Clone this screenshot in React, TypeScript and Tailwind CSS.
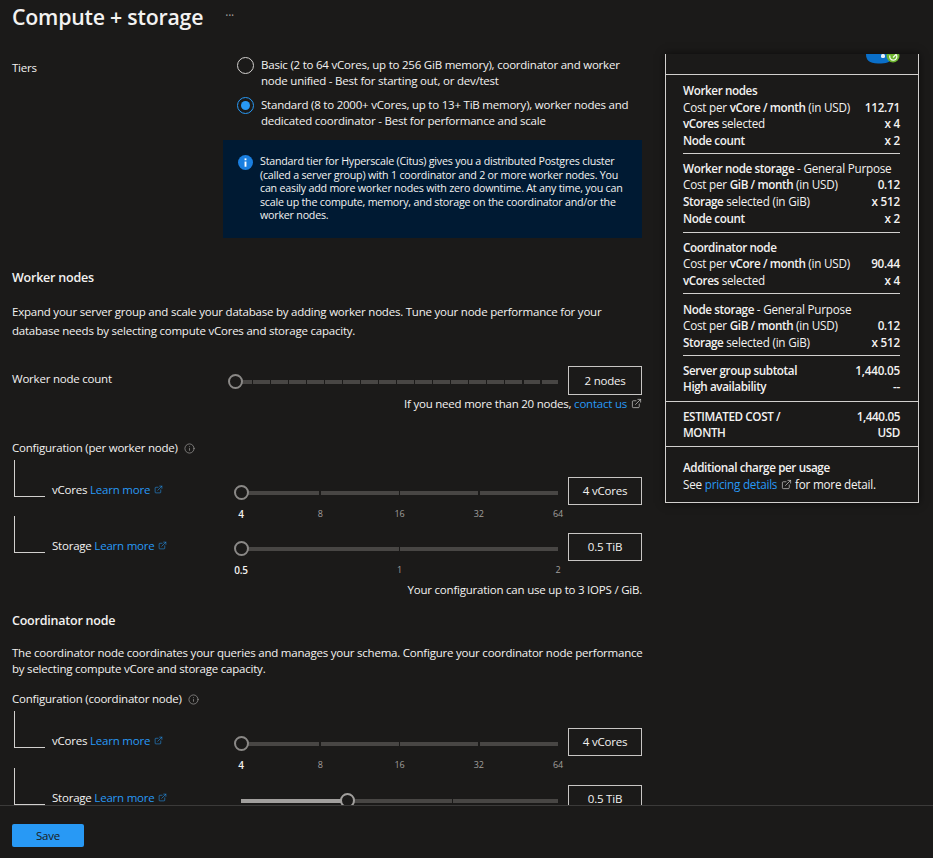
import { ExternalLink, Info } from "lucide-react";

const TEXT_FONT = "font-['Open_Sans','Liberation_Sans',sans-serif]";

function OutLink({ children, small }: { children: string; small?: boolean }) {
  return (
    <span className="text-[#2899f5]">
      {children}
      <ExternalLink
        className={small ? "inline ml-[4px] mb-[2px] w-[9px] h-[9px]" : "inline ml-[4px] mb-[3px] w-[11px] h-[11px] text-[#d2d0ce]"}
        strokeWidth={1.5}
      />
    </span>
  );
}

function Slider({ segments, fill = 0 }: { segments: number; fill?: number }) {
  return (
    <div className="relative h-[15px] flex items-center">
      <div className="flex-1 flex gap-[1.5px] ml-[7px]">
        {Array.from({ length: segments }).map((_, i) => (
          <div key={i} className={i < fill ? "h-[4px] flex-1 bg-[#a19f9d]" : "h-[4px] flex-1 bg-[#484644]"} />
        ))}
      </div>
      <div
        className={
          fill
            ? "absolute left-[106px] top-0 w-[15px] h-[15px] rounded-full border-2 border-[#a19f9d] bg-[#1b1a19]"
            : "absolute left-0 top-0 w-[15px] h-[15px] rounded-full border-2 border-[#8a8886] bg-[#1b1a19]"
        }
      />
    </div>
  );
}

function Ticks({ labels }: { labels: string[] }) {
  return (
    <div className="flex justify-between ml-[7px] mt-[7px] h-[14px]">
      {labels.map((l, i) => (
        <div key={l} className="w-0 flex justify-center">
          <span className={i === 0 ? "text-[10px] leading-[14px] font-semibold text-[#f3f2f1]" : "text-[9px] leading-[14px] text-[#a19f9d]"}>{l}</span>
        </div>
      ))}
    </div>
  );
}

function ValueBox({ value, height = "h-[28px]" }: { value: string; height?: string }) {
  return (
    <div className={`w-[74px] ${height} shrink-0 border border-[#c8c6c4] flex items-center justify-center text-[11.5px]`}>
      {value}
    </div>
  );
}

function TreeRow({
  name,
  value,
  segments,
  labels,
  fill,
  height,
}: {
  name: string;
  value: string;
  segments: number;
  labels?: string[];
  fill?: number;
  height: string;
}) {
  return (
    <div className={`flex ${height}`}>
      <div className="w-[31px] h-[37px] ml-[2px] shrink-0 border-l border-b border-[#d2d0ce]" />
      <div className="w-[182px] ml-[7px] shrink-0 mt-[21px] h-[18px] leading-[18px] whitespace-nowrap">
        {name} <OutLink small>Learn more</OutLink>
      </div>
      <div className="w-[324px] shrink-0 mt-[25px]">
        <Slider segments={segments} fill={fill} />
        {labels && <Ticks labels={labels} />}
      </div>
      <div className="ml-[10px] mt-[17px]">
        <ValueBox value={value} />
      </div>
    </div>
  );
}

function CostRow({ label, value }: { label: React.ReactNode; value?: string }) {
  return (
    <div className="flex justify-between leading-[16.7px] h-[16.7px] whitespace-nowrap">
      <div>{label}</div>
      {value && <div className="font-semibold">{value}</div>}
    </div>
  );
}

const B = ({ children }: { children: string }) => <span className="font-semibold tracking-[-0.4px]">{children}</span>;
const Rule = () => <div className="h-px bg-[#d2d0ce]" />;

export default function App() {
  return (
    <div className={`${TEXT_FONT} tracking-[-0.22px] w-[933px] h-[858px] flex flex-col bg-[#1b1a19] text-[#f3f2f1] overflow-hidden`}>
      <div className="h-[36px] shrink-0 pl-3 pb-[2px] flex items-center">
        <h1 className="text-[21.3px] leading-[28px] font-semibold">Compute + storage</h1>
        <span className="ml-[22px] mb-[2px] text-[12px] text-[#a19f9d]">···</span>
      </div>

      <div className="flex-1 flex overflow-hidden">
        <div className="w-[642px] shrink-0 pl-3 text-[11.5px]">
          <div className="flex">
            <div className="w-[211px] shrink-0 mt-[23px] leading-[18px]">Tiers</div>
            <div className="w-[419px] shrink-0">
              <div className="pl-[14px] mt-[21px] flex gap-[7px] leading-[16px]">
                <div className="w-[17px] h-[17px] shrink-0 rounded-full border border-[#d2d0ce]" />
                <div>
                  Basic (2 to 64 vCores, up to 256 GiB memory), coordinator and worker
                  <br />
                  node unified - Best for starting out, or dev/test
                </div>
              </div>
              <div className="pl-[14px] mt-[8px] flex gap-[7px] leading-[16px]">
                <div className="w-[17px] h-[17px] shrink-0 rounded-full border border-[#2899f5] flex items-center justify-center">
                  <div className="w-[9px] h-[9px] rounded-full bg-[#2899f5]" />
                </div>
                <div>
                  Standard (8 to 2000+ vCores, up to 13+ TiB memory), worker nodes and
                  <br />
                  dedicated coordinator - Best for performance and scale
                </div>
              </div>
              <div className="mt-[11px] h-[98px] bg-[#001a33] pl-[15px] pt-[15px] flex gap-[7px]">
                <svg width="15" height="15" viewBox="0 0 16 16" className="shrink-0">
                  <circle cx="8" cy="8" r="8" fill="#1a7fe0" />
                  <rect x="7" y="7" width="2" height="5.5" fill="#fff" />
                  <rect x="7" y="3.6" width="2" height="2" fill="#fff" />
                </svg>
                <div className="text-[10.7px] leading-[13.5px]">
                  Standard tier for Hyperscale (Citus) gives you a distributed Postgres cluster
                  <br />
                  (called a server group) with 1 coordinator and 2 or more worker nodes. You
                  <br />
                  can easily add more worker nodes with zero downtime. At any time, you can
                  <br />
                  scale up the compute, memory, and storage on the coordinator and/or the
                  <br />
                  worker nodes.
                </div>
              </div>
            </div>
          </div>

          <h2 className="mt-[31px] text-[12.5px] leading-[18px] font-semibold">Worker nodes</h2>
          <p className="mt-[15px] leading-[19px]">
            Expand your server group and scale your database by adding worker nodes. Tune your node performance for your
            <br />
            database needs by selecting compute vCores and storage capacity.
          </p>

          <div className="mt-[26px] flex items-center h-[29px]">
            <div className="w-[216px] shrink-0 mb-[3px]">Worker node count</div>
            <div className="w-[330px] shrink-0 mt-[2px]">
              <Slider segments={18} />
            </div>
            <div className="ml-[10px]">
              <ValueBox value="2 nodes" height="h-[29px]" />
            </div>
          </div>
          <div className="mt-[1px] leading-[16px] text-right">
            If you need more than 20 nodes, <OutLink>contact us</OutLink>
          </div>

          <div className="mt-[27px] leading-[18px] flex items-center gap-[6px]">
            Configuration (per worker node) <Info className="w-[11px] h-[11px] text-[#a19f9d]" strokeWidth={1.5} />
          </div>
          <div className="mt-[3px]">
            <TreeRow name="vCores" value="4 vCores" segments={4} labels={["4", "8", "16", "32", "64"]} height="h-[56px]" />
            <TreeRow name="Storage" value="0.5 TiB" segments={2} labels={["0.5", "1", "2"]} height="h-[56px]" />
          </div>
          <div className="mt-[9px] leading-[18px] text-right">Your configuration can use up to 3 IOPS / GiB.</div>

          <h2 className="mt-[13px] text-[12.5px] leading-[18px] font-semibold">Coordinator node</h2>
          <p className="mt-[15px] leading-[16px] whitespace-nowrap">
            The coordinator node coordinates your queries and manages your schema. Configure your coordinator node performance
            <br />
            by selecting compute vCore and storage capacity.
          </p>
          <div className="mt-[13px] leading-[18px] flex items-center gap-[6px]">
            Configuration (coordinator node) <Info className="w-[11px] h-[11px] text-[#a19f9d]" strokeWidth={1.5} />
          </div>
          <div className="mt-[3px]">
            <TreeRow name="vCores" value="4 vCores" segments={4} labels={["4", "8", "16", "32", "64"]} height="h-[57px]" />
            <TreeRow name="Storage" value="0.5 TiB" segments={3} fill={1} height="h-[37px]" />
          </div>
        </div>

        <div className="pt-[18px] pl-[23px]">
          <div className="w-[254px] border-x border-b border-[#d2d0ce] text-[11.7px] shadow-[0_0_8px_rgba(0,0,0,0.6)]">
            <div className="h-[21px] border-b border-[#d2d0ce] flex justify-end items-start pr-[16px]">
              <svg width="36" height="10" viewBox="0 0 36 10" className="overflow-hidden">
                <path d="M0 0H24V6C24 8 21 9.500 12 9.500C3 9.500 0 6 0 0Z" fill="#0a6fc9" />
                <rect x="15" y="0" width="4" height="4" rx="1.500" fill="#e8f1fa" />
                <circle cx="27" cy="2" r="6.500" fill="#6cb52d" />
                <path d="M24 1.500A3.500 3.500 0 1 0 30 0.500L27 3.500" fill="none" stroke="#f3f9ec" strokeWidth="1.300" />
              </svg>
            </div>
            <div className="pl-[17px] pr-[18px]">
              <div className="pt-[7px] pb-[4px]">
                <CostRow label={<B>Worker nodes</B>} />
                <CostRow label={<>Cost per <B>vCore / month</B> (in USD)</>} value="112.71" />
                <CostRow label={<><B>vCores</B> selected</>} value="x 4" />
                <CostRow label={<B>Node count</B>} value="x 2" />
              </div>
              <Rule />
              <div className="pt-[6px] pb-[5px]">
                <CostRow label={<><B>Worker node storage</B> - General Purpose</>} />
                <CostRow label={<>Cost per <B>GiB / month</B> (in USD)</>} value="0.12" />
                <CostRow label={<><B>Storage</B> selected (in GiB)</>} value="x 512" />
                <CostRow label={<B>Node count</B>} value="x 2" />
              </div>
              <Rule />
              <div className="pt-[6px] pb-[4px]">
                <CostRow label={<B>Coordinator node</B>} />
                <CostRow label={<>Cost per <B>vCore / month</B> (in USD)</>} value="90.44" />
                <CostRow label={<><B>vCores</B> selected</>} value="x 4" />
              </div>
              <Rule />
              <div className="pt-[7px] pb-[4px]">
                <CostRow label={<><B>Node storage</B> - General Purpose</>} />
                <CostRow label={<>Cost per <B>GiB / month</B> (in USD)</>} value="0.12" />
                <CostRow label={<><B>Storage</B> selected (in GiB)</>} value="x 512" />
              </div>
              <Rule />
              <div className="pt-[6px] pb-[6px]">
                <CostRow label={<B>Server group subtotal</B>} value="1,440.05" />
                <CostRow label={<B>High availability</B>} value="--" />
              </div>
            </div>
            <Rule />
            <div className="pl-[17px] pr-[18px] pt-[6px] pb-[6px] flex justify-between font-semibold tracking-[-0.4px] leading-[16px]">
              <div className="w-[120px]">ESTIMATED COST / MONTH</div>
              <div className="w-[60px] text-right">1,440.05 USD</div>
            </div>
            <Rule />
            <div className="pl-[17px] pr-[18px] pt-[12px] pb-[9px] leading-[16.7px]">
              <B>Additional charge per usage</B>
              <br />
              See <OutLink>pricing details</OutLink> for more detail.
            </div>
          </div>
        </div>
      </div>

      <div className="h-[53px] shrink-0 border-t border-[#3b3a39] pl-3 pt-[18px] flex items-start">
        <button className="w-[72px] h-[23px] rounded-[2px] bg-[#2899f5] text-[#1b1a19] text-[11.5px] leading-[23px]">Save</button>
      </div>
    </div>
  );
}
